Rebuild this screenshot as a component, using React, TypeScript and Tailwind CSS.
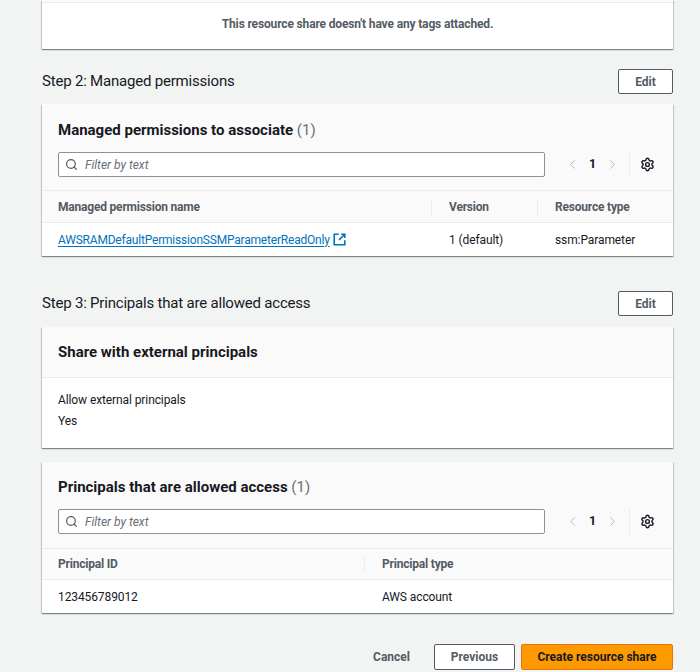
import { Search, ChevronLeft, ChevronRight, Settings } from 'lucide-react';

const FONT = { fontFamily: 'Roboto, "Noto Sans", sans-serif' };

function ExternalIcon() {
  return (
    <svg width="13" height="13" viewBox="0 0 16 16" fill="none" stroke="#0073bb" strokeWidth="2" className="ml-[3px] shrink-0">
      <path d="M7 1.5H1.5v13h13V9" />
      <path d="M10 1.5h4.5V6" />
      <path d="M14.5 1.5L7.5 8.5" />
    </svg>
  );
}

function Toolbar() {
  return (
    <div className="flex items-center mt-[11px]">
      <div className="flex items-center w-[487px] h-[25px] bg-white border border-[#879596] rounded-[2px] px-[6px] gap-[7px]">
        <Search size={13} strokeWidth={2.25} color="#545b64" />
        <span className="text-[12px] italic text-[#687078]">Filter by text</span>
      </div>
      <div className="flex items-center ml-[20px] h-[25px]">
        <ChevronLeft size={15} strokeWidth={1.5} color="#aab7b8" />
        <span className="mx-[9px] text-[12.5px] font-bold text-[#16191f]">1</span>
        <ChevronRight size={15} strokeWidth={1.5} color="#aab7b8" />
        <div className="ml-[9px] w-px h-[25px] bg-[#eaeded]" />
        <Settings size={15} strokeWidth={2.25} color="#16191f" className="ml-[10px]" />
      </div>
    </div>
  );
}

function Card({ children }: { children: React.ReactNode }) {
  return (
    <div className="bg-white shadow-[0_1px_1px_0_rgba(0,28,36,0.3),1px_1px_1px_0_rgba(0,28,36,0.15),-1px_1px_1px_0_rgba(0,28,36,0.15)] overflow-hidden">
      {children}
    </div>
  );
}

function StepHeader({ title }: { title: string }) {
  return (
    <div className="flex items-center justify-between h-[25px]">
      <h2 className="text-[15px] tracking-[-0.2px] text-[#16191f]">{title}</h2>
      <button className="w-[55px] h-[25px] border border-[#545b64] rounded-[2px] bg-white text-[12px] font-bold text-[#545b64]">
        Edit
      </button>
    </div>
  );
}

export default function App() {
  return (
    <div style={FONT} className="min-h-[672px] bg-[#f2f3f3] pl-[42px] pr-[27px] text-[#16191f]">
      {/* Tags card (cut off) */}
      <Card>
        <div className="h-[3px] bg-[#fafafa] border-b border-[#eaeded]" />
        <div className="pt-[12px] pb-[16px] text-center text-[12px] leading-[18px] font-bold tracking-[-0.15px] text-[#545b64]">
          This resource share doesn't have any tags attached.
        </div>
      </Card>

      {/* Step 2 */}
      <div className="mt-[20px]">
        <StepHeader title="Step 2: Managed permissions" />
      </div>
      <div className="mt-[10px]">
        <Card>
          <div className="bg-[#fafafa] px-[16px] pt-[15px] pb-[13px] border-b border-[#eaeded]">
            <h3 className="text-[15px] leading-[22px] font-bold">
              Managed permissions to associate <span className="font-normal text-[#687078]">(1)</span>
            </h3>
            <Toolbar />
          </div>
          <div className="grid grid-cols-[390px_106px_1fr] bg-[#fafafa] h-[32px] border-b border-[#eaeded] items-center text-[12px] font-bold tracking-[-0.2px] text-[#545b64]">
            <div className="pl-[16px] h-[16px] border-r border-[#eaeded] flex items-center">Managed permission name</div>
            <div className="pl-[17px] h-[16px] border-r border-[#eaeded] flex items-center">Version</div>
            <div className="pl-[17px]">Resource type</div>
          </div>
          <div className="grid grid-cols-[390px_106px_1fr] h-[33px] items-center text-[12px] tracking-[-0.1px]">
            <div className="pl-[16px] flex items-center">
              <a className="text-[#0073bb] underline underline-offset-2 tracking-[-0.2px]">AWSRAMDefaultPermissionSSMParameterReadOnly</a>
              <ExternalIcon />
            </div>
            <div className="pl-[17px]">1 (default)</div>
            <div className="pl-[17px]">ssm:Parameter</div>
          </div>
        </Card>
      </div>

      {/* Step 3 */}
      <div className="mt-[35px]">
        <StepHeader title="Step 3: Principals that are allowed access" />
      </div>
      <div className="mt-[11px]">
        <Card>
          <div className="bg-[#fafafa] px-[16px] pt-[14px] pb-[14px] border-b border-[#eaeded]">
            <h3 className="text-[15px] leading-[22px] font-bold">Share with external principals</h3>
          </div>
          <div className="px-[16px] pt-[12px] pb-[16px] text-[12px] tracking-[-0.1px] leading-[21px]">
            <div>Allow external principals</div>
            <div>Yes</div>
          </div>
        </Card>
      </div>

      <div className="mt-[14px]">
        <Card>
          <div className="bg-[#fafafa] px-[16px] pt-[14px] pb-[14px] border-b border-[#eaeded]">
            <h3 className="text-[15px] leading-[22px] font-bold">
              Principals that are allowed access <span className="font-normal text-[#687078]">(1)</span>
            </h3>
            <Toolbar />
          </div>
          <div className="grid grid-cols-[323px_1fr] bg-[#fafafa] h-[31px] border-b border-[#eaeded] items-center text-[12px] font-bold tracking-[-0.2px] text-[#545b64]">
            <div className="pl-[16px] h-[16px] border-r border-[#eaeded] flex items-center">Principal ID</div>
            <div className="pl-[17px]">Principal type</div>
          </div>
          <div className="grid grid-cols-[323px_1fr] h-[33px] items-center text-[12px] tracking-[-0.1px]">
            <div className="pl-[16px]">123456789012</div>
            <div className="pl-[17px]">AWS account</div>
          </div>
        </Card>
      </div>

      {/* Actions */}
      <div className="mt-[31px] flex items-center justify-end h-[26px]">
        <button className="text-[12px] font-bold text-[#545b64] mr-[24px]">Cancel</button>
        <button className="w-[81px] h-[26px] border border-[#545b64] rounded-[2px] bg-white text-[12px] font-bold text-[#545b64] mr-[6px]">
          Previous
        </button>
        <button className="w-[152px] h-[26px] border border-[#ec7211] rounded-[2px] bg-[#ff9900] text-[12px] font-bold text-[#16191f]">
          Create resource share
        </button>
      </div>
    </div>
  );
}
